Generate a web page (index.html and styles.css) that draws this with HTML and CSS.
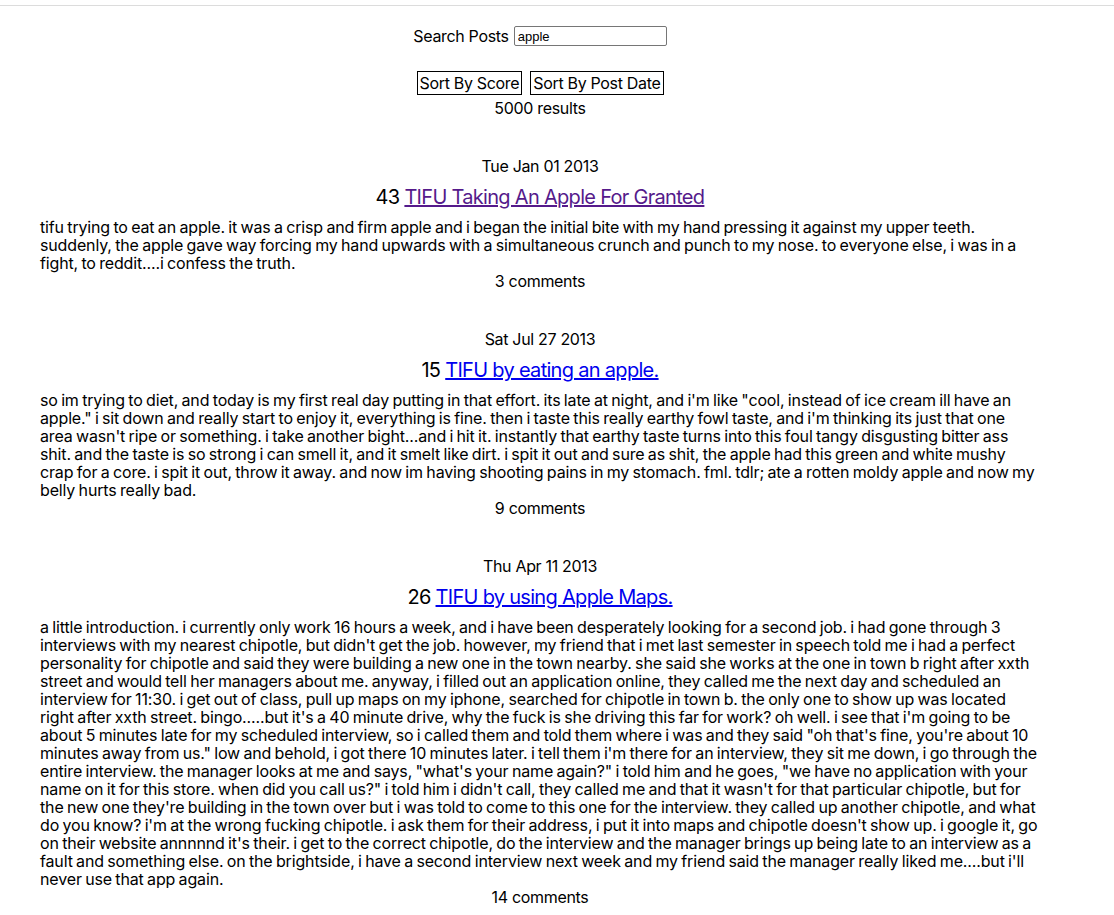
FILE: index.html
```html
<!DOCTYPE html>
<html>
<head>
<meta charset="utf-8">
<link rel="stylesheet" href="styles.css">
</head>
<body>
<div class="topbar"></div>
<main class="page">
  <div class="search">
    <label class="search-label" for="q">Search Posts</label>
    <input id="q" class="search-input" type="text" value="apple">
  </div>
  <div class="sorts">
    <button class="sort-btn">Sort By Score</button>
    <button class="sort-btn">Sort By Post Date</button>
  </div>
  <div class="count">5000 results</div>

  <article class="post">
    <div class="date">Tue Jan 01 2013</div>
    <div class="title">43 <a class="visited" href="#">TIFU Taking An Apple For Granted</a></div>
    <p class="body">tifu trying to eat an apple. it was a crisp and firm apple and i began the initial bite with my hand pressing it against my upper teeth. suddenly, the apple gave way forcing my hand upwards with a simultaneous crunch and punch to my nose. to everyone else, i was in a fight, to reddit....i confess the truth.</p>
    <div class="comments">3 comments</div>
  </article>

  <article class="post">
    <div class="date">Sat Jul 27 2013</div>
    <div class="title">15 <a href="#">TIFU by eating an apple.</a></div>
    <p class="body">so im trying to diet, and today is my first real day putting in that effort. its late at night, and i'm like "cool, instead of ice cream ill have an apple." i sit down and really start to enjoy it, everything is fine. then i taste this really earthy fowl taste, and i'm thinking its just that one area wasn't ripe or something. i take another bight...and i hit it. instantly that earthy taste turns into this foul tangy disgusting bitter ass shit. and the taste is so strong i can smell it, and it smelt like dirt. i spit it out and sure as shit, the apple had this green and white mushy crap for a core. i spit it out, throw it away. and now im having shooting pains in my stomach. fml. tdlr; ate a rotten moldy apple and now my belly hurts really bad.</p>
    <div class="comments">9 comments</div>
  </article>

  <article class="post">
    <div class="date">Thu Apr 11 2013</div>
    <div class="title">26 <a href="#">TIFU by using Apple Maps.</a></div>
    <p class="body">a little introduction. i currently only work 16 hours a week, and i have been desperately looking for a second job. i had gone through 3 interviews with my nearest chipotle, but didn't get the job. however, my friend that i met last semester in speech told me i had a perfect personality for chipotle and said they were building a new one in the town nearby. she said she works at the one in town b right after xxth street and would tell her managers about me. anyway, i filled out an application online, they called me the next day and scheduled an interview for 11:30. i get out of class, pull up maps on my iphone, searched for chipotle in town b. the only one to show up was located right after xxth street. bingo.....but it's a 40 minute drive, why the fuck is she driving this far for work? oh well. i see that i'm going to be about 5 minutes late for my scheduled interview, so i called them and told them where i was and they said "oh that's fine, you're about 10 minutes away from us." low and behold, i got there 10 minutes later. i tell them i'm there for an interview, they sit me down, i go through the entire interview. the manager looks at me and says, "what's your name again?" i told him and he goes, "we have no application with your name on it for this store. when did you call us?" i told him i didn't call, they called me and that it wasn't for that particular chipotle, but for the new one they're building in the town over but i was told to come to this one for the interview. they called up another chipotle, and what do you know? i'm at the wrong fucking chipotle. i ask them for their address, i put it into maps and chipotle doesn't show up. i google it, go on their website annnnnd it's their. i get to the correct chipotle, do the interview and the manager brings up being late to an interview as a fault and something else. on the brightside, i have a second interview next week and my friend said the manager really liked me....but i'll never use that app again.</p>
    <div class="comments">14 comments</div>
  </article>
</main>
</body>
</html>
```

FILE: styles.css
```css
html, body {
  margin: 0;
  padding: 0;
  background: #fff;
}
body {
  font-family: Inter, "Noto Sans", sans-serif;
  font-size: 16px;
  line-height: 18px;
  letter-spacing: -0.32px;
  color: #000;
}
.topbar {
  height: 5px;
  border-bottom: 1px solid #dcdcdc;
}
.page {
  width: 1000px;
  margin-left: 40px;
  display: flex;
  flex-direction: column;
  align-items: center;
}
.search {
  margin-top: 20px;
  display: flex;
  align-items: center;
  gap: 5px;
  height: 20px;
}
.search-label {
  font-size: 16px;
}
.search-input {
  width: 153px;
  height: 20px;
  box-sizing: border-box;
  border: 1px solid #767676;
  border-radius: 2px;
  padding: 1px 3px;
  font-family: "Liberation Sans", Arial, sans-serif;
  font-size: 13px;
  letter-spacing: 0;
  margin: 0;
}
.sorts {
  margin-top: 25px;
  display: flex;
  gap: 8px;
}
.sort-btn {
  font-family: Inter, "Noto Sans", sans-serif;
  font-size: 16px;
  line-height: 18px;
  letter-spacing: -0.32px;
  height: 24px;
  background: #fff;
  border: 1px solid #000;
  border-radius: 0;
  padding: 2px 2px;
  color: #000;
  margin: 0;
}
.count {
  margin-top: 4px;
}
.post {
  margin-top: 40px;
  width: 100%;
  display: flex;
  flex-direction: column;
  align-items: center;
}
.title {
  font-size: 20px;
  line-height: 24px;
  letter-spacing: -0.7px;
  margin-top: 10px;
}
.title a {
  color: #0000ee;
}
.title a.visited {
  color: #551a8b;
}
.body {
  margin: 9px 0 0 0;
  align-self: stretch;
  text-align: left;
  letter-spacing: -0.15px;
  word-spacing: -0.95px;
}
```
